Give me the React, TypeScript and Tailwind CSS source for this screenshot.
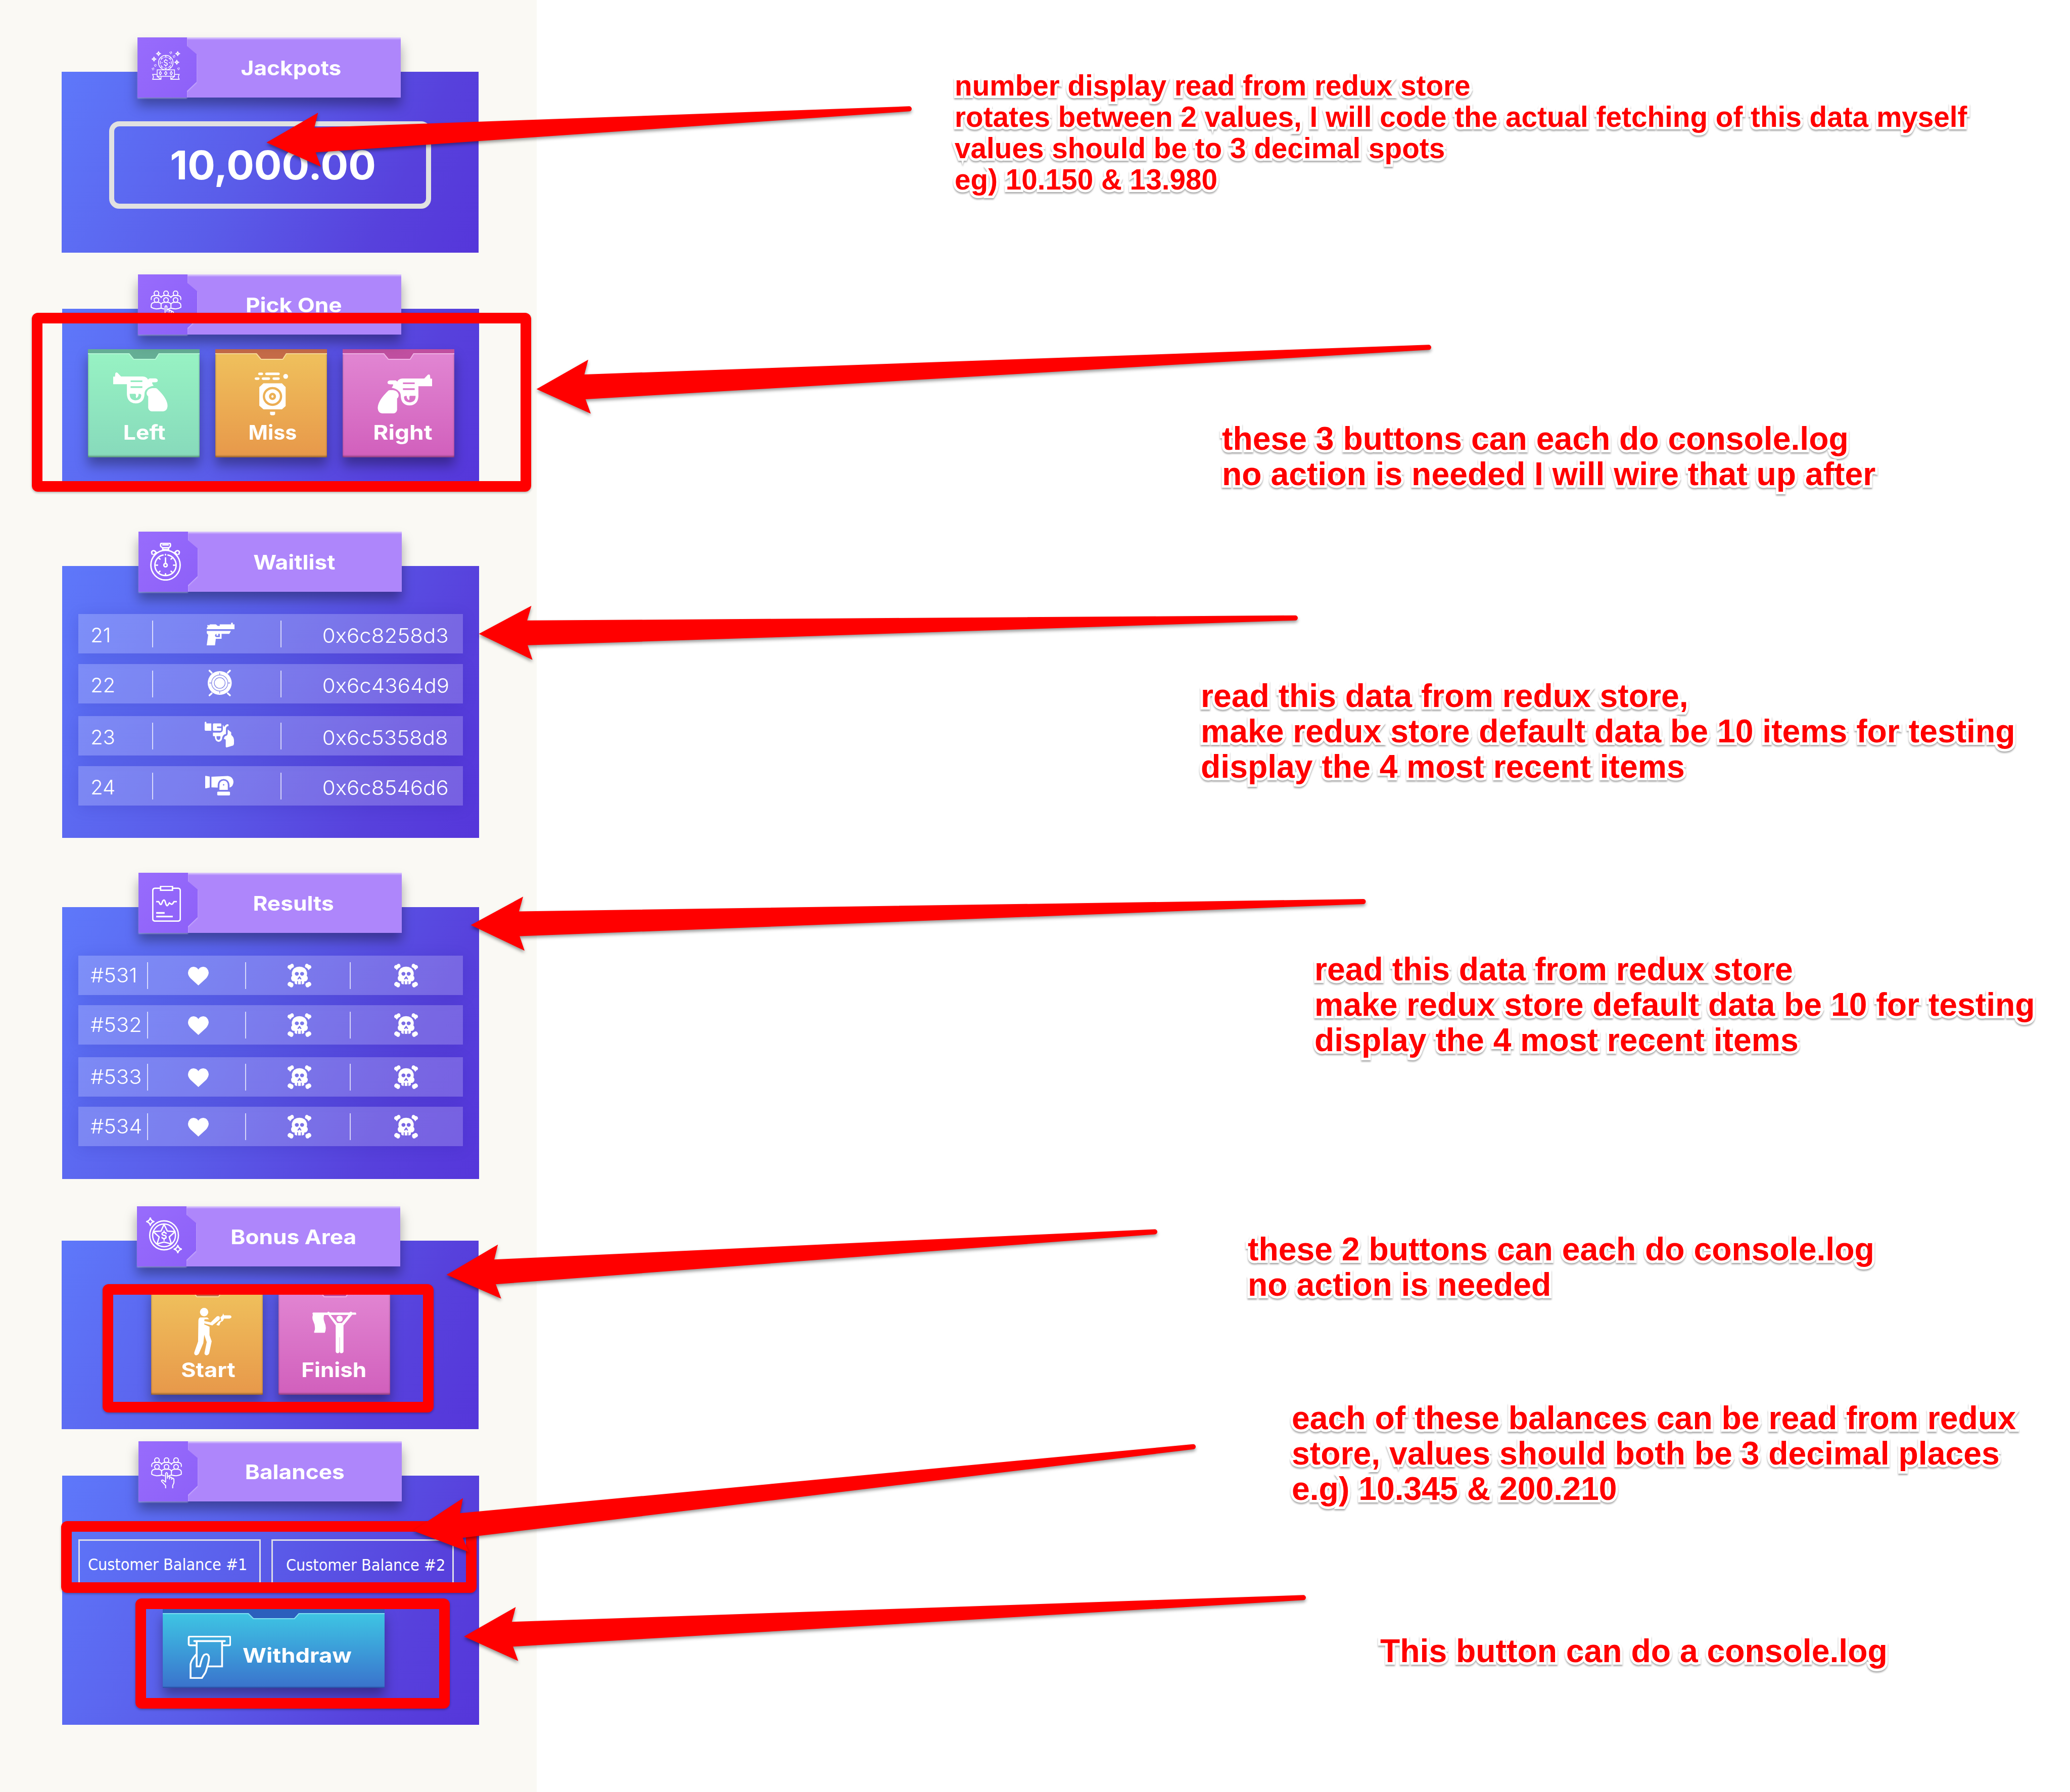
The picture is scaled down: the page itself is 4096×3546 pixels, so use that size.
import React from "react";

type IconProps = { className?: string };

const line = {
  fill: "none",
  stroke: "#fff",
  strokeLinejoin: "round" as const,
  strokeLinecap: "round" as const,
};

/* ---------- header icons ---------- */

const sparkle = (cx: number, cy: number, rx: number, ry: number) =>
  `M${cx} ${cy - ry}Q${cx + rx * 0.2} ${cy - ry * 0.2} ${cx + rx} ${cy}Q${cx + rx * 0.2} ${cy + ry * 0.2} ${cx} ${cy + ry}Q${cx - rx * 0.2} ${cy + ry * 0.2} ${cx - rx} ${cy}Q${cx - rx * 0.2} ${cy - ry * 0.2} ${cx} ${cy - ry}Z`;

function JackpotIcon({ className }: IconProps) {
  return (
    <svg className={className} viewBox="48 48 252 254">
      <g {...line} strokeWidth={7} strokeLinejoin="miter" strokeLinecap="butt">
        <circle cx="172" cy="150" r="64" />
        <circle cx="172" cy="150" r="49" strokeWidth={6} strokeDasharray="30 8.500" strokeDashoffset="15" />
        <path d="M172 86v16M172 198v14M127 105l8 8M217 105l-8 8M127 195l8-8M217 195l-8-8" />
        <path d="M186 138q0-10-14-10t-14 10q0 10 14 13t14 13q0 10-14 10t-14-10M172 117v12M172 174v12" />
        <path d="M96 214h153v57H96z" />
        <path strokeWidth={6.5} d="M124 227l10 16-10 16-10-16zM172 227l11 16-11 16-11-16zM220 227l10 16-10 16-10-16z" />
        <path d="M96 254H56l8 21-8 22h74v-22M249 254h41l-8 21 8 22h-74v-22M96 271l34 26M249 271l-33 26" />
      </g>
      <g fill="#fff" fillRule="evenodd">
        <path d={sparkle(108, 71, 22, 22) + "M108 66a5 5 0 1 0 .1 0Z"} stroke="#fff" strokeWidth="3" />
        <path d={sparkle(277, 71, 22, 22) + "M277 66a5 5 0 1 0 .1 0Z"} stroke="#fff" strokeWidth="3" />
        <path d={sparkle(68, 119, 22, 22) + "M68 114a5 5 0 1 0 .1 0Z"} stroke="#fff" strokeWidth="3" />
        <path d={sparkle(269, 147, 22, 22) + "M269 142a5 5 0 1 0 .1 0Z"} stroke="#fff" strokeWidth="3" />
        <circle cx="139" cy="151" r="5" />
        <circle cx="205" cy="151" r="5" />
      </g>
      <g {...line} strokeWidth={7} strokeDasharray="8 4.560" strokeDashoffset="4" strokeLinecap="butt">
        <circle cx="216" cy="63" r="8" />
        <circle cx="245" cy="96" r="8" />
        <circle cx="80" cy="175" r="8" />
        <circle cx="60" cy="205" r="8" />
        <circle cx="285" cy="204" r="8" />
      </g>
    </svg>
  );
}

function PeopleIcon({ className }: IconProps) {
  return (
    <svg className={className} viewBox="307 132 100 158" preserveAspectRatio="none">
      <g {...line} strokeWidth={2}>
        {[326, 357, 388].map((x) => (
          <g key={x}>
            <ellipse cx={x} cy="146" rx="7.500" ry="12" vectorEffect="non-scaling-stroke" />
            <ellipse cx={x} cy="180" rx="7.500" ry="12" vectorEffect="non-scaling-stroke" />
          </g>
        ))}
        <path vectorEffect="non-scaling-stroke" d="M309 178V170Q310 157 323 157H330Q339 157 341 168Q343 157 354 157H361Q370 157 373 168Q375 157 385 157H392Q404 157 405 170V178" />
        <path vectorEffect="non-scaling-stroke" d="M323 192H330Q340 192 341 204V222Q333 226 325 226Q316 225 309 218V206Q310 192 323 192ZM385 192H391Q404 192 405 206V218Q398 225 389 226Q381 226 373 222V204Q374 192 385 192ZM341 204Q342 192 354 192H361Q372 192 373 204V222M341 222L350 226M365 226L373 222" />
        <path vectorEffect="non-scaling-stroke" d="M354 289V276L341 254Q340 247 345 248L354 258V214Q357 206 360 214V238M360 238V230Q364 226 367 232V242V234Q371 230 374 236V244V239Q379 237 381 243V262L377 276V289" />
      </g>
    </svg>
  );
}

function StopwatchIcon({ className }: IconProps) {
  return (
    <svg className={className} viewBox="304 102 100 181" preserveAspectRatio="none">
      <g {...line} strokeWidth={2.8}>
        <ellipse vectorEffect="non-scaling-stroke" cx="354" cy="209" rx="47.500" ry="71" />
        <path vectorEffect="non-scaling-stroke" d="M342 104H366Q370 105 370 110V118Q369 123 364 126V135H345V126Q340 123 338 118V110Q338 105 342 104ZM345 126H364M345 112H363" />
        <path vectorEffect="non-scaling-stroke" d="M311 157Q306 144 313 140Q319 138 323 148M397 157Q402 144 395 140Q389 138 385 148M316 159L325 149M392 159L383 149" />
        <path vectorEffect="non-scaling-stroke" d="M346 161A32 49 0 0 0 346 257.500Q354 260 362 257.500A32 49 0 0 0 362 161" />
        <ellipse vectorEffect="non-scaling-stroke" cx="354" cy="209" rx="5.500" ry="8" />
        <path vectorEffect="non-scaling-stroke" d="M354 200V174M354 158V160M354 250V256M324 209H328M380 209H384M333 176L336 180M375 176L372 180M333 242L336 238M375 242L372 238" />
      </g>
    </svg>
  );
}

function ClipboardIcon({ className }: IconProps) {
  return (
    <svg className={className} viewBox="311 115 92 171" preserveAspectRatio="none">
      <g {...line} strokeWidth={2.8} strokeLinejoin="miter" strokeLinecap="butt">
        <path vectorEffect="non-scaling-stroke" d="M337 126H320Q313 127 313 138V271Q313 282 320 283H394Q401 282 401 271V138Q401 127 394 126H377" />
        <path vectorEffect="non-scaling-stroke" d="M338 117H376V136H338Z" />
        <path vectorEffect="non-scaling-stroke" d="M324 190H332L336 201Q339 206 341 201L345 187Q349 177 352 187L356 205Q359 214 362 205L366 196L370 200Q374 206 377 199L381 190H390" />
        <path vectorEffect="non-scaling-stroke" strokeWidth={3.4} d="M324 244H351M324 261H377" />
      </g>
    </svg>
  );
}

function BonusIcon({ className }: IconProps) {
  return (
    <svg className={className} viewBox="47 68 245 310" preserveAspectRatio="none">
      <g {...line} strokeWidth={2.6}>
        <ellipse vectorEffect="non-scaling-stroke" cx="170" cy="223" rx="98" ry="125" />
        <ellipse vectorEffect="non-scaling-stroke" cx="170" cy="223" rx="78" ry="98" />
        <path vectorEffect="non-scaling-stroke" d="M170 128L192 186L245 191L205 237L220 297L170 281L122 297L137 237L96 191L149 186Z" />
        <path vectorEffect="non-scaling-stroke" d="M184 208Q182 198 170 198Q155 198 156 210Q156 220 170 223Q184 226 184 238Q184 250 170 250Q157 250 156 241M170 186V198M170 250V266" />
        <path vectorEffect="non-scaling-stroke" d={sparkle(76, 104, 25, 32)} />
        <path vectorEffect="non-scaling-stroke" d={sparkle(264, 342, 25, 32)} />
      </g>
    </svg>
  );
}

/* ---------- button icons ---------- */

function RevolverIcon({ className }: IconProps) {
  return (
    <svg className={className} viewBox="42 36 251 339" preserveAspectRatio="none">
      <g fill="#fff" fillRule="evenodd">
        <path d="M42 72H50L52 42Q57 31 63 42L78 71H178Q196 73 202 98L209 88H236Q247 92 247 107Q246 121 234 122H222Q219 133 228 152Q206 160 196 180Q186 194 186 225Q184 303 146 306Q107 302 105 225V138H42ZM122 105V120H176V105ZM122 156V171H176V156ZM118 222Q117 278 146 279Q172 276 171 232Q169 222 159 222Q159 248 149 259Q144 252 147 240Q147 226 144 222Z" />
        <path d="M221 172H237Q243 172 248 186Q292 266 292 330Q290 372 272 375H220Q206 372 203 345V245Q194 232 196 210Q200 178 221 172Z" />
      </g>
    </svg>
  );
}

function TargetIcon({ className }: IconProps) {
  return (
    <svg className={className} viewBox="693 38 152 371" preserveAspectRatio="none">
      <g fill="#fff">
        <rect x="709" y="39" width="22" height="22" rx="6" ry="9" />
        <rect x="741" y="39" width="66" height="22" rx="6" ry="9" />
        <rect x="693" y="81" width="22" height="21" rx="6" ry="9" />
        <rect x="725" y="81" width="38" height="21" rx="6" ry="9" />
        <rect x="774" y="81" width="33" height="21" rx="6" ry="9" />
        <ellipse cx="834" cy="72" rx="11" ry="21" />
        <path fillRule="evenodd" d="M733 132H817L834 165V328L817 357H733L714 325V165ZM774 163A44 82 0 1 0 774.100 163ZM774 183A34 62 0 1 1 773.900 183ZM774 214A16 31 0 1 0 774.100 214ZM774 234A5 11 0 1 1 773.900 234Z" />
        <path d="M763 377H786V397Q785 407 779 408H770Q764 407 763 397Z" />
      </g>
    </svg>
  );
}

function ShooterIcon({ className }: IconProps) {
  return (
    <svg className={className} viewBox="447 724 121 305" preserveAspectRatio="none">
      <g fill="#fff">
        <ellipse cx="479.500" cy="751" rx="13.500" ry="27" />
        <path d="M467 786H490L496 797H481L480 808L501 817L520 780Q525 774 529 780Q532 788 529 800L506 837L480 824V830L497 845V899L504 938L496 1015Q493 1029 486 1028Q480 1025 481 1012L488 944L480 897L477 950L463 1016Q459 1030 452 1028Q446 1024 448 1009L460 940L461 805Q462 788 467 786Z" />
        <path d="M532 785L539 773L541 760L544 772H563Q568 775 568 783Q567 792 562 793H544L540 808L533 815L529 836Q525 840 519 833L527 812L535 804Z" />
      </g>
    </svg>
  );
}

function FlagIcon({ className }: IconProps) {
  return (
    <svg className={className} viewBox="828 745 141 271" preserveAspectRatio="none">
      <g fill="#fff">
        <path d="M830 752H876Q879 741 884 752H947Q952 741 956 752H967Q970 758 968 766H956L928 835V1006Q926 1016 921 1015Q916 1014 916 1005V912H915V1005Q914 1015 909 1015Q904 1014 903 1005V835L879 768H866Q862 792 867 815Q875 850 868 883H834Q833 875 836 865Q838 835 831 808Q826 785 830 767Q827 759 830 752ZM887 768L908 820H923L944 768Z" />
        <ellipse cx="915.500" cy="793" rx="10" ry="20" />
      </g>
    </svg>
  );
}

function WithdrawIcon({ className }: IconProps) {
  return (
    <svg className={className} viewBox="425 1044 142 222" preserveAspectRatio="none">
      <g {...line} strokeWidth={3.6} strokeLinejoin="miter">
        <path vectorEffect="non-scaling-stroke" d="M454 1093H433Q429 1092 429 1087V1053Q429 1048 433 1047H561Q565 1048 565 1053V1087Q565 1092 561 1093H541" />
        <path vectorEffect="non-scaling-stroke" d="M447 1071H547" />
        <path vectorEffect="non-scaling-stroke" d="M455 1073V1202H466M538 1073V1202H490" />
        <path vectorEffect="non-scaling-stroke" d="M453 1141Q437 1170 435 1190V1262H472L484 1232Q497 1170 495 1152Q491 1132 480 1142Q473 1150 466 1200" />
      </g>
    </svg>
  );
}

/* ---------- row icons ---------- */

function PistolIcon({ className }: IconProps) {
  return (
    <svg className={className} viewBox="107 107 241 173" preserveAspectRatio="none">
      <path fill="#fff" fillRule="evenodd" d="M108 146L117 139L111 131L118 123L126 129L136 120H187L203 132H220V120H319V108H333V120H348V157H108ZM108 170H317L303 193H236V230H186L179 280H107L120 200L108 188ZM192 193Q179 196 179 206Q181 217 192 218H221V193H207V206H192Z" />
    </svg>
  );
}

function ShieldIcon({ className }: IconProps) {
  return (
    <svg className={className} viewBox="116 464 206 200" preserveAspectRatio="none">
      <ellipse cx="218" cy="564" rx="102" ry="89" fill="#fff" />
      <g fill="none" stroke="#7d7fe8" strokeWidth="5">
        <ellipse cx="218" cy="564" rx="69" ry="60" />
        <ellipse cx="218" cy="564" rx="46" ry="40" />
        <path d="M218 487V504M218 624V642M130 564H149M287 564H307" />
      </g>
      <path stroke="#fff" strokeWidth="14" strokeLinecap="round" d="M131 472L150 488M305 472L286 488M131 656L150 641M305 656L286 641" />
    </svg>
  );
}

function BrokenRevolverIcon({ className }: IconProps) {
  return (
    <svg className={className} viewBox="90 855 252 193" preserveAspectRatio="none">
      <g fill="#fff" fillRule="evenodd">
        <path d="M90 862Q92 855 98 855Q104 856 105 862V868H147V923H96Q91 922 90 916Z" />
        <path d="M167 868H228Q233 869 233 874V891H201Q194 892 194 897Q195 902 201 903H233V917Q232 922 227 923H167Q162 922 161 917V874Q162 869 167 868Z" />
        <path d="M161 937H222Q246 935 246 912V878L257 895L268 882Q277 874 291 874Q296 877 296 882Q295 888 289 889Q273 891 273 912V948Q252 949 241 972Q240 1004 209 1006Q178 1003 177 964H166Q161 963 161 958ZM192 964V975Q194 991 209 992Q224 991 225 975V964Z" />
        <path d="M288 914L318 934V954Q341 970 342 992V1020Q341 1030 334 1034L280 1048Q273 1048 271 1042V992Q269 985 255 985Q255 972 266 964L279 959Q287 954 288 945Z" />
      </g>
    </svg>
  );
}

function CannonIcon({ className }: IconProps) {
  return (
    <svg className={className} viewBox="96 1259 244 150" preserveAspectRatio="none">
      <g fill="#fff" fillRule="evenodd">
        <path d="M96 1262Q98 1259 102 1260L135 1266V1348L102 1355Q98 1355 96 1352Z" />
        <path d="M150 1267L292 1261Q336 1266 340 1306Q338 1342 306 1349V1330Q301 1287 255 1284Q208 1287 204 1330V1349L150 1347Z" />
        <path d="M219 1367V1330Q221 1298 255 1296Q289 1298 291 1330V1367ZM255 1322A6 6 0 1 0 255.100 1322Z" />
        <rect x="200" y="1380" width="110" height="29" rx="7" />
      </g>
    </svg>
  );
}

function HeartIcon({ className }: IconProps) {
  return (
    <svg className={className} viewBox="426 499 66 88" preserveAspectRatio="none">
      <path fill="#fff" d="M459 587L434 553Q426 541 426 527Q428 501 443 499Q454 500 459 512Q464 500 475 499Q490 501 492 527Q491 541 484 553Z" />
    </svg>
  );
}

function SkullIcon({ className }: IconProps) {
  return (
    <svg className={className} viewBox="750 484 77 113" preserveAspectRatio="none">
      <g fill="#fff" fillRule="evenodd">
        <path d="M788.500 498Q808 499 813 524Q814 535 812 542Q817 548 815 558Q812 569 804 568V577Q801 583 796 582V567H793V582H784V567H781V582Q776 583 773 577V568Q764 569 762 558Q760 548 765 542Q763 535 764 524Q769 499 788.500 498ZM780 523A6.500 9 0 1 0 780.100 523ZM797 523A6.500 9 0 1 0 797.100 523ZM788 544L782 556Q783 561 786 558L789 554L791 558Q795 561 795 556L790 545Z" />
        <path d="M766 484Q772 488 770 500L764 505L758 515L756 509Q749 507 750 498Q752 489 758 490Q761 484 766 484Z" />
        <path d="M811 484Q805 488 807 500L813 505L819 515L821 509Q828 507 827 498Q825 489 819 490Q816 484 811 484Z" />
        <path d="M758 570L768 577Q771 588 766 595Q760 599 757 592Q750 590 750 581Q751 572 758 570Z" />
        <path d="M819 570L809 577Q806 588 811 595Q817 599 820 592Q827 590 827 581Q826 572 819 570Z" />
      </g>
    </svg>
  );
}

/* ---------- building blocks ---------- */

type SectionProps = {
  title: string;
  icon: React.ReactNode;
  className: string;
  headerClass: string;
  titleClass?: string;
  panelClass: string;
  children: React.ReactNode;
};

function Section({ title, icon, className, headerClass, titleClass = "", panelClass, children }: SectionProps) {
  return (
    <section className={`w-[825px] shrink-0 ${className}`}>
      <header className={`relative z-10 flex h-[119px] w-[521px] bg-[#ae86fb] shadow-[0_16px_22px_rgba(0,0,0,0.34)] ${headerClass}`}>
        <div className="z-10 [filter:drop-shadow(0_2px_1px_rgba(255,255,255,0.35))]">
          <div className="h-[119px] w-[117px] bg-linear-to-br from-[#986cfc] to-[#8d60f8] [clip-path:polygon(0_0,98px_0,98px_17px,117px_33px,117px_88px,98px_106px,98px_119px,0_119px)]">
            {icon}
          </div>
        </div>
        <div className={`-ml-[19px] flex flex-1 items-center justify-center pt-[2px] text-[40px] leading-[48px] font-bold text-white shadow-[inset_0_5px_3px_-2px_rgba(255,255,255,0.5)] ${titleClass}`}>
          <h2 className="scale-x-[1.105]">{title}</h2>
        </div>
      </header>
      <div className={`-mt-[51px] bg-[linear-gradient(116deg,#5e78fa_0%,#5a5ce9_45%,#5741dc_78%,#5536da_100%)] ${panelClass}`}>
        {children}
      </div>
    </section>
  );
}

const tones = {
  green: { lid: "bg-[#65ae95]", edge: "bg-[#b5f8d6]", face: "from-[#97f2c3] to-[#87dabb]" },
  orange: { lid: "bg-[#c56b48]", edge: "bg-[#f8dc9b]", face: "from-[#efc05c] to-[#e7984a]" },
  pink: { lid: "bg-[#c04fa0]", edge: "bg-[#f0b3e6]", face: "from-[#e185d2] to-[#d15fbc]" },
};

type ActionProps = {
  label: string;
  tone: keyof typeof tones;
  iconClass: string;
  labelClass: string;
  children: React.ReactNode;
};

function ActionButton({ label, tone, iconClass, labelClass, children }: ActionProps) {
  const t = tones[tone];
  return (
    <button
      type="button"
      onClick={() => console.log(label)}
      className={`h-[214px] w-[221px] pt-[8px] shadow-[0_16px_22px_rgba(0,0,0,0.34)] ${t.lid}`}
    >
      <div className={`h-[206px] pt-[2px] [clip-path:polygon(0_0,82px_0,91px_11px,133px_11px,140px_0,100%_0,100%_100%,0_100%)] ${t.edge}`}>
        <div className={`flex h-[204px] flex-col items-center bg-linear-to-b shadow-[inset_0_-4px_3px_-1px_rgba(0,0,0,0.3),inset_3px_0_3px_-2px_rgba(0,0,0,0.18),inset_-3px_0_3px_-2px_rgba(0,0,0,0.18)] [clip-path:polygon(0_0,81px_0,90px_11px,134px_11px,141px_0,100%_0,100%_100%,0_100%)] ${t.face}`}>
          <div className={`h-[131px] ${iconClass}`}>{children}</div>
          <span className={`text-[40px] leading-[48px] font-bold text-white ${labelClass}`}>{label}</span>
        </div>
      </div>
    </button>
  );
}

const Divider = () => <div className="mt-[13px] h-[53px] w-[2px] bg-white/70" />;

const waitlist = [
  { id: "21", address: "0x6c8258d3", icon: <PistolIcon className="mt-[17px] ml-[106px] h-[45px] w-[55px]" />, gap: "" },
  { id: "22", address: "0x6c4364d9", icon: <ShieldIcon className="mt-[11px] ml-[108px] h-[53px] w-[48px]" />, gap: "mt-[21px]" },
  { id: "23", address: "0x6c5358d8", icon: <BrokenRevolverIcon className="mt-[11px] ml-[102px] h-[51px] w-[58px]" />, gap: "mt-[25px]" },
  { id: "24", address: "0x6c8546d6", icon: <CannonIcon className="mt-[19px] ml-[103px] h-[39px] w-[56px]" />, gap: "mt-[21px]" },
];

const results = [
  { id: "#531", gap: "" },
  { id: "#532", gap: "mt-[20px]" },
  { id: "#533", gap: "mt-[25px]" },
  { id: "#534", gap: "mt-[20px]" },
];

const rowClass =
  "flex h-[78px] w-[761px] bg-white/20 text-[40px] leading-[48px] font-light text-white shadow-[0_4px_30px_rgba(20,10,120,0.12)]";

/* ---------- annotations ---------- */

function Arrow({ tip, tail }: { tip: [number, number]; tail: [number, number] }) {
  const dx = tail[0] - tip[0];
  const dy = tail[1] - tip[1];
  const length = Math.hypot(dx, dy);
  const angle = (Math.atan2(dy, dx) * 180) / Math.PI;
  const end = length - 7;
  return (
    <path
      transform={`translate(${tip[0]} ${tip[1]}) rotate(${angle})`}
      d={`M0 0L105 -53.500L96 -24.500L${end} -5A5 5 0 0 1 ${end} 5L96 24.500L105 53.500Z`}
      fill="#ff0000"
    />
  );
}

const arrows: { tip: [number, number]; tail: [number, number] }[] = [
  { tip: [527.4, 282], tail: [1806, 215] },
  { tip: [1061.6, 770], tail: [2834, 687] },
  { tip: [947.6, 1254.2], tail: [2570, 1222.6] },
  { tip: [931.6, 1830.5], tail: [2704.5, 1783.8] },
  { tip: [883.7, 2522.6], tail: [2292, 2437] },
  { tip: [817.4, 3029], tail: [2368, 2862] },
  { tip: [918.1, 3238.2], tail: [2586, 3161] },
];

const frameClass =
  "absolute z-20 rounded-[12px] border-[21px] border-[#ff0000] shadow-[0_2px_4px_rgba(0,0,0,0.3)]";

const noteClass =
  "shrink-0 font-bold whitespace-nowrap text-[#ff0000] [-webkit-text-stroke:10px_white] [paint-order:stroke_fill] [filter:drop-shadow(0_3px_1.500px_rgba(0,0,0,0.32))]";

function Note({ lines, className }: { lines: string[]; className: string }) {
  return (
    <div className={`${noteClass} ${className}`}>
      {lines.map((text) => (
        <p key={text}>{text}</p>
      ))}
    </div>
  );
}

const largeNote = "text-[64.300px] leading-[70px]";

export default function App() {
  return (
    <div className="relative flex h-[3546px] w-[4096px] overflow-hidden bg-white font-['Inter',sans-serif]">
      <aside className="isolate flex h-full w-[1062px] shrink-0 flex-col bg-[#faf9f4]">
        <Section
          title="Jackpots"
          icon={<JackpotIcon className="ml-[28px] h-[57px] w-[57px] translate-y-[27px]" />}
          className="mt-[74px] ml-[122px]"
          headerClass="ml-[150px]"
          titleClass="pr-[11px]"
          panelClass="h-[358px] pt-[98px] pl-[94px]"
        >
          <div className="flex h-[173px] w-[637px] items-center justify-center rounded-[20px] border-[10px] border-[#e1e1e1] pl-[12px]">
            <span className="scale-x-[1.04] text-[78px] leading-[90px] font-bold text-white">10,000.00</span>
          </div>
        </Section>

        <Section
          title="Pick One"
          icon={<PeopleIcon className="ml-[25px] h-[61px] w-[61px] translate-y-[32px]" />}
          className="mt-[43px] ml-[123px]"
          headerClass="ml-[150px]"
          titleClass="pr-[3px]"
          panelClass="flex h-[350px] gap-[31px] pt-[80px] pl-[51px]"
        >
          <ActionButton label="Left" tone="green" iconClass="pt-[36px] mr-[13px]" labelClass="ml-[3px] scale-x-[1.11]">
            <RevolverIcon className="h-[77px] w-[108px]" />
          </ActionButton>
          <ActionButton label="Miss" tone="orange" iconClass="pt-[36px]" labelClass="ml-[5px] scale-x-[1.03]">
            <TargetIcon className="h-[85px] w-[66px]" />
          </ActionButton>
          <ActionButton label="Right" tone="pink" iconClass="pt-[40px] ml-[24px]" labelClass="ml-[17px] scale-x-[1.15]">
            <RevolverIcon className="h-[77px] w-[108px] -scale-x-100" />
          </ActionButton>
        </Section>

        <Section
          title="Waitlist"
          icon={<StopwatchIcon className="ml-[23px] h-[75px] w-[61px] translate-y-[22px]" />}
          className="mt-[91px] ml-[123px]"
          headerClass="ml-[151px]"
          titleClass="pr-[2px]"
          panelClass="h-[538px] pt-[95px] pl-[32px]"
        >
          {waitlist.map((row) => (
            <div key={row.id} className={`${rowClass} ${row.gap}`}>
              <div className="w-[146px] pt-[18px] pl-[24px]">{row.id}</div>
              <Divider />
              <div className="w-[252px]">{row.icon}</div>
              <Divider />
              <div className="origin-left scale-x-[1.05] pt-[19px] pl-[77px]">{row.address}</div>
            </div>
          ))}
        </Section>

        <Section
          title="Results"
          icon={<ClipboardIcon className="ml-[27px] h-[71px] w-[57px] translate-y-[26px]" />}
          className="mt-[69px] ml-[123px]"
          headerClass="ml-[151px]"
          titleClass="pr-[6px]"
          panelClass="h-[538px] pt-[96px] pl-[32px]"
        >
          {results.map((row) => (
            <div key={row.id} className={`${rowClass} ${row.gap}`}>
              <div className="w-[136px] pt-[15px] pl-[24px]">
                <span className="inline-block origin-left scale-x-[1.04]">{row.id}</span>
              </div>
              <Divider />
              <div className="w-[192px]"><HeartIcon className="mt-[22px] ml-[79px] h-[37px] w-[41px]" /></div>
              <Divider />
              <div className="w-[205px]"><SkullIcon className="mt-[16px] ml-[82px] h-[47px] w-[47px]" /></div>
              <Divider />
              <div><SkullIcon className="mt-[16px] ml-[86px] h-[47px] w-[47px]" /></div>
            </div>
          ))}
        </Section>

        <Section
          title="Bonus Area"
          icon={<BonusIcon className="ml-[18px] h-[71px] w-[71px] translate-y-[22px]" />}
          className="mt-[54px] ml-[122px]"
          headerClass="ml-[149px]"
          panelClass="flex h-[373px] gap-[31px] pt-[91px] pl-[177px]"
        >
          <ActionButton label="Start" tone="orange" iconClass="pt-[32px] ml-[23px]" labelClass="ml-[4px] scale-x-[1.12]">
            <ShooterIcon className="h-[94px] w-[74px]" />
          </ActionButton>
          <ActionButton label="Finish" tone="pink" iconClass="pt-[39px]" labelClass="mr-[2px] scale-x-[1.10]">
            <FlagIcon className="h-[83px] w-[87px]" />
          </ActionButton>
        </Section>

        <Section
          title="Balances"
          icon={<PeopleIcon className="ml-[25px] h-[61px] w-[61px] translate-y-[32px]" />}
          className="mt-[24px] ml-[123px]"
          headerClass="ml-[151px]"
          panelClass="h-[493px] pt-[126px] pl-[32px]"
        >
          <div className="flex gap-[21px] font-['DejaVu_Sans_Condensed','DejaVu_Sans',sans-serif] text-[32px] leading-[40px] whitespace-nowrap text-white">
            <div className="h-[96px] w-[361px] border-[3px] border-[#dcdce8] pt-[27px] pl-[16px]">Customer Balance #1</div>
            <div className="h-[96px] w-[361px] border-[3px] border-[#dcdce8] pt-[28px] pl-[26px]">Customer Balance #2</div>
          </div>
          <button
            type="button"
            onClick={() => console.log("Withdraw")}
            className="mt-[42px] ml-[167px] block h-[156px] w-[439px] bg-[#2b5fbd] pt-[8px] text-left shadow-[0_16px_22px_rgba(0,0,0,0.34)]"
          >
            <div className="h-[148px] bg-[#7fe0f2] pt-[2px] [clip-path:polygon(0_0,170px_0,180px_10px,260px_10px,269px_0,100%_0,100%_100%,0_100%)]">
              <div className="flex h-[146px] bg-linear-to-b from-[#3ec4e3] to-[#3a72cc] shadow-[inset_0_-3px_2px_-1px_rgba(0,0,80,0.3)] [clip-path:polygon(0_0,169px_0,179px_10px,261px_10px,270px_0,100%_0,100%_100%,0_100%)]">
                <WithdrawIcon className="mt-[43px] ml-[49px] h-[85px] w-[86px]" />
                <span className="mt-[58px] ml-[23px] origin-left scale-x-[1.135] text-[40px] leading-[48px] font-bold text-white">Withdraw</span>
              </div>
            </div>
          </button>
        </Section>
      </aside>

      <main className="flex flex-1 flex-col font-['Liberation_Sans',Arial,sans-serif]">
        <Note
          className="mt-[139px] ml-[827px] text-[56.700px] leading-[62px]"
          lines={[
            "number display read from redux store",
            "rotates between 2 values, I will code the actual fetching of this data myself",
            "values should be to 3 decimal spots",
            "eg) 10.150 & 13.980",
          ]}
        />
        <Note
          className={`mt-[446px] ml-[1356px] ${largeNote}`}
          lines={["these 3 buttons can each do console.log", "no action is needed I will wire that up after"]}
        />
        <Note
          className={`mt-[369px] ml-[1314px] ${largeNote}`}
          lines={["read this data from redux store,", "make redux store default data be 10 items for testing", "display the 4 most recent items"]}
        />
        <Note
          className={`mt-[331px] ml-[1539px] ${largeNote}`}
          lines={["read this data from redux store", "make redux store default data be 10 for testing", "display the 4 most recent items"]}
        />
        <Note
          className={`mt-[344px] ml-[1407px] ${largeNote}`}
          lines={["these 2 buttons can each do console.log", "no action is needed"]}
        />
        <Note
          className={`mt-[194px] ml-[1494px] ${largeNote}`}
          lines={["each of these balances can be read from redux", "store, values should both be 3 decimal places", "e.g) 10.345 & 200.210"]}
        />
        <Note className={`mt-[251px] ml-[1669px] ${largeNote}`} lines={["This button can do a console.log"]} />
      </main>

      <div className={`${frameClass} top-[619px] left-[63px] h-[354px] w-[988px]`} />
      <div className={`${frameClass} top-[2541px] left-[203px] h-[254px] w-[655px]`} />
      <div className={`${frameClass} top-[3010px] left-[121px] h-[142px] w-[822px]`} />
      <div className={`${frameClass} top-[3163px] left-[268px] h-[218px] w-[622px]`} />

      <svg className="pointer-events-none absolute inset-0 z-20 h-full w-full [filter:drop-shadow(0_4px_3px_rgba(0,0,0,0.4))]" viewBox="0 0 4096 3546">
        {arrows.map((a) => (
          <Arrow key={a.tip[1]} tip={a.tip} tail={a.tail} />
        ))}
      </svg>
    </div>
  );
}
